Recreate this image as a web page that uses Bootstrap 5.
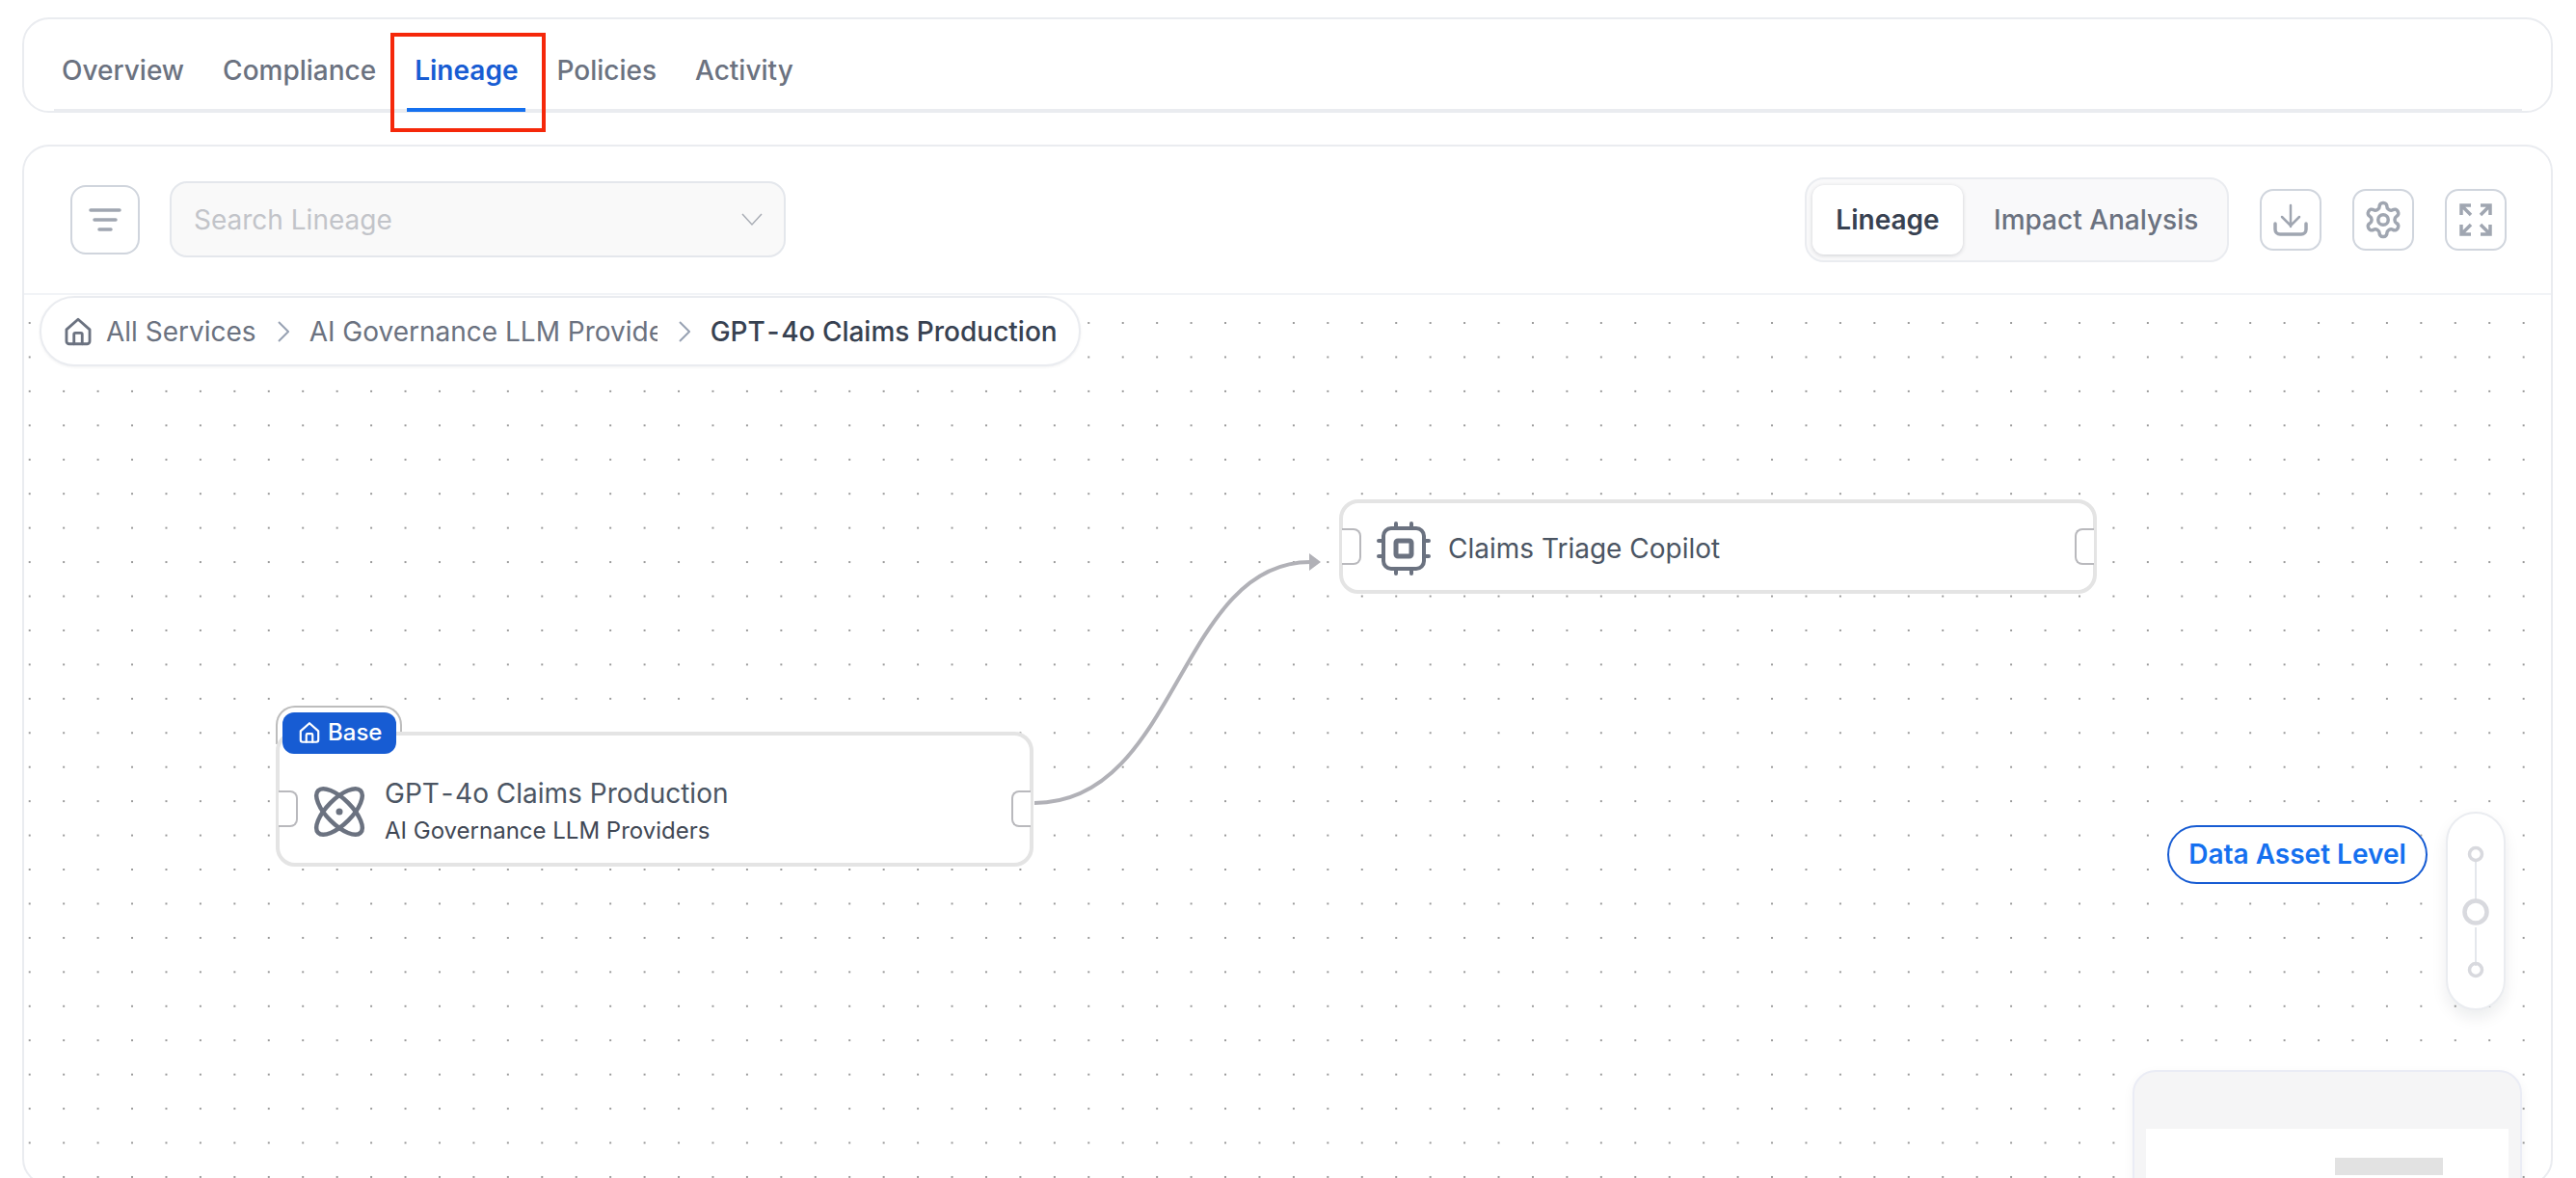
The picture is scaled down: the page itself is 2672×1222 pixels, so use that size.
<!DOCTYPE html>
<html lang="en">
<head>
  <meta charset="UTF-8">
  <title>Lineage</title>
  <link href="https://cdn.jsdelivr.net/npm/bootstrap@5.3.0/dist/css/bootstrap.min.css" rel="stylesheet" />
  <style>
    html, body { height: 100%; overflow: hidden; background: #fff; }
    body { font-family: Inter, "Liberation Sans", sans-serif; font-size: 28px; color: #6b7280; }

    .page-wrap { padding: 18px 24px 0 23px; }

    .tabs-card { height: 99px; border: 2px solid #eaecf0; border-radius: 28px; background: #fff; margin-bottom: 33px; }
    .tabs-row { height: 96px; margin: 0 30px 0 31px; border-bottom: 3px solid #eaecf0; gap: 24px; padding-top: 31px; }
    .tab-link { position: relative; padding: 0 8px; height: 65px; line-height: 44px; color: #6b7280; font-weight: 500; }
    .tab-link.tab-on { color: #175cd3; font-weight: 600; border-bottom: 4px solid #1570ef; }
    .red-box { position: absolute; left: -17px; right: -21px; top: -17px; bottom: -25px; border: 4px solid #f5280a; }

    .main-card { height: 1080px; border: 2px solid #eaecf0; border-radius: 28px; background: #fff; overflow: hidden; }
    .tool-row { height: 154px; padding: 0 46px 0 48px; border-bottom: 2px solid #f2f4f7; }
    .tool-btn { width: 64px; height: 64px; padding: 0; border: 2px solid #d0d5dd; border-radius: 14px; background: #fff; }
    .filter-btn { width: 72px; height: 72px; border-radius: 16px; margin-right: 31px; }
    .search-box { width: 639px; height: 79px; padding: 0 22px 0 23px; border: 2px solid #e4e7ec; border-radius: 18px; background: #f9f9f9; color: #c2c4c9; }
    .view-toggle { width: 440px; height: 88px; padding: 7px 6px; border: 2px solid #eaecf0; border-radius: 20px; background: #f9f9fa; margin-right: 32px; }
    .view-on { width: 156px; height: 72px; border-radius: 12px; background: #fff; color: #374151; font-weight: 600; box-shadow: 0 1px 4px rgba(16, 24, 40, .18); }
    .view-off { padding-left: 32px; font-weight: 500; }
    .tool-gap { gap: 32px; }

    .flow-canvas {
      position: relative; height: 924px; overflow: hidden;
      background-image: radial-gradient(circle, #9a9a9a 1.1px, transparent 1.3px);
      background-size: 35.45px 35.45px;
      background-position: -12px 11.3px;
    }

    .crumbs { position: absolute; left: 16px; top: 1px; width: 1080px; height: 73px; padding: 2px 0 0 21px; background: #fff; border: 2px solid #eaecf0; border-radius: 36px; box-shadow: 0 1px 3px rgba(16, 24, 40, .06); white-space: nowrap; }
    .crumb-home { margin-right: 12px; }
    .crumb-cut { width: 361px; overflow: hidden; }
    .crumb-now { color: #374151; font-weight: 500; }
    .crumb-sep { margin: 0 21px 0 22px; }
    .hy-gap { padding: 0 .06em; }

    .flow-node { position: absolute; background: #fff; border: 4px solid #e4e4e4; border-radius: 20px; }
    .node-base { left: 261px; top: 453px; width: 786px; height: 140px; }
    .node-copilot { left: 1364px; top: 212px; width: 786px; height: 98px; }
    .base-tab { position: absolute; left: 261px; top: 426px; width: 131px; height: 40px; border: 2px solid #bdbdbd; border-bottom: 0; border-radius: 20px 20px 0 0; background: #fff; }
    .base-badge { position: absolute; left: 268px; top: 433px; width: 118px; height: 43px; padding-left: 15px; gap: 6px; border-radius: 12px; background: #175cd3; color: #fff; font-size: 24px; font-weight: 500; z-index: 2; }
    .flow-handle { position: absolute; width: 20px; height: 38px; border: 2px solid #b9b9bd; background: #fff; }
    .handle-in { left: -1px; border-left: 0; border-radius: 0 8px 8px 0; }
    .handle-out { right: -1px; border-right: 0; border-radius: 8px 0 0 8px; }
    .node-base .flow-handle { top: 57px; }
    .node-copilot .flow-handle { top: 26px; }
    .node-inner { height: 100%; }
    .node-base .node-inner { padding-left: 34px; gap: 19px; padding-top: 26px; }
    .node-copilot .node-inner { padding-left: 35px; gap: 18px; padding-top: 4px; }
    .node-title { color: #4b5563; line-height: 40px; }
    .node-sub { color: #3f4754; font-size: 24px; line-height: 38px; }
    .edge-layer { position: absolute; left: 0; top: 0; width: 2622px; height: 924px; }

    .level-pill { position: absolute; left: 2223px; top: 550px; width: 270px; height: 61px; border: 2px solid #175cd3; border-radius: 31px; background: #fff; color: #1570ef; font-weight: 600; }
    .level-track { position: absolute; left: 2512px; top: 536px; width: 62px; height: 206px; border: 2px solid #eaecf0; border-radius: 31px; background: #fff; box-shadow: 0 8px 16px rgba(16, 24, 40, .08); }

    .mini-map { position: absolute; left: 2187px; top: 804px; width: 404px; height: 140px; padding: 59px 12px 0; border: 2px solid #eaecf5; border-radius: 24px; background: #f5f5f6; box-shadow: 0 4px 12px rgba(16, 24, 40, .05); }
    .mini-sheet { position: relative; height: 80px; background: #fff; }
    .mini-node { position: absolute; left: 196px; top: 30px; width: 112px; height: 18px; background: #e2e2e2; }
  </style>
</head>
<body>
  <div class="page-wrap">
    <div class="card tabs-card">
      <nav class="nav tabs-row">
        <a class="tab-link text-decoration-none" href="#">Overview</a>
        <a class="tab-link text-decoration-none" href="#">Compliance</a>
        <a class="tab-link tab-on text-decoration-none" href="#">Lineage<span class="red-box"></span></a>
        <a class="tab-link text-decoration-none" href="#">Policies</a>
        <a class="tab-link text-decoration-none" href="#">Activity</a>
      </nav>
    </div>

    <div class="card main-card">
      <div class="tool-row d-flex align-items-center justify-content-between">
        <div class="d-flex align-items-center">
          <button class="btn tool-btn filter-btn d-flex align-items-center justify-content-center" type="button" aria-label="Filter">
            <svg width="34" height="26" viewBox="0 0 34 26" fill="none" stroke="#a0a6b1" stroke-width="3.500" stroke-linecap="round"><path d="M2 3h30M6 13h22M11 23h12"/></svg>
          </button>
          <div class="search-box d-flex align-items-center justify-content-between">
            <span>Search Lineage</span>
            <svg width="22" height="14" viewBox="0 0 22 14" fill="none" stroke="#a9adb5" stroke-width="1.500"><path d="M1 1l10 11L21 1"/></svg>
          </div>
        </div>
        <div class="d-flex align-items-center">
          <div class="view-toggle d-flex align-items-center">
            <div class="view-on d-flex align-items-center justify-content-center">Lineage</div>
            <div class="view-off">Impact Analysis</div>
          </div>
          <div class="d-flex align-items-center tool-gap">
            <button class="btn tool-btn d-flex align-items-center justify-content-center" type="button" aria-label="Download">
              <svg width="36" height="36" viewBox="0 0 36 36" fill="none" stroke="#a0a6b1" stroke-linecap="round" stroke-linejoin="round"><path stroke-width="2.500" d="M18 3v22M9 15l9 9 9-9"/><path stroke-width="3.500" d="M2 22v6a5 5 0 0 0 5 5h22a5 5 0 0 0 5-5v-6"/></svg>
            </button>
            <button class="btn tool-btn d-flex align-items-center justify-content-center" type="button" aria-label="Settings">
              <svg width="42" height="42" viewBox="0 0 24 24" fill="none" stroke="#a0a6b1" stroke-width="2" stroke-linecap="round" stroke-linejoin="round"><path d="M12.22 2h-.44a2 2 0 0 0-2 2v.18a2 2 0 0 1-1 1.73l-.43.25a2 2 0 0 1-2 0l-.15-.08a2 2 0 0 0-2.730.73l-.22.38a2 2 0 0 0 .73 2.730l.15.1a2 2 0 0 1 1 1.72v.51a2 2 0 0 1-1 1.74l-.15.09a2 2 0 0 0-.73 2.730l.22.38a2 2 0 0 0 2.730.73l.15-.08a2 2 0 0 1 2 0l.43.25a2 2 0 0 1 1 1.73V20a2 2 0 0 0 2 2h.44a2 2 0 0 0 2-2v-.18a2 2 0 0 1 1-1.73l.43-.25a2 2 0 0 1 2 0l.15.08a2 2 0 0 0 2.730-.73l.22-.39a2 2 0 0 0-.73-2.730l-.15-.08a2 2 0 0 1-1-1.74v-.5a2 2 0 0 1 1-1.74l.15-.09a2 2 0 0 0 .73-2.730l-.22-.38a2 2 0 0 0-2.730-.73l-.15.08a2 2 0 0 1-2 0l-.43-.25a2 2 0 0 1-1-1.73V4a2 2 0 0 0-2-2z"/><circle cx="12" cy="12" r="3"/></svg>
            </button>
            <button class="btn tool-btn d-flex align-items-center justify-content-center" type="button" aria-label="Fullscreen">
              <svg width="36" height="36" viewBox="0 0 36 36" fill="none" stroke="#a0a6b1" stroke-width="3.500"><path d="M3 13V3h10M3 3l10 10M33 13V3H23M33 3L23 13M3 23v10h10M3 33l10-10M33 23v10H23M33 33L23 23"/></svg>
            </button>
          </div>
        </div>
      </div>

      <div class="flow-canvas">
        <svg class="edge-layer" viewBox="0 0 2622 924" fill="none">
          <path d="M1048 527C1197 527 1197 277 1334 277" stroke="#b1b1b7" stroke-width="4"/>
          <path d="M1345 277l-12-9v18z" fill="#b1b1b7"/>
        </svg>

        <div class="crumbs d-flex align-items-center">
          <svg class="crumb-home" width="34" height="34" viewBox="0 0 24 24" fill="none" stroke="#6b7280" stroke-width="2" stroke-linecap="round" stroke-linejoin="round"><path d="M3.500 10.500L12 3l8.500 7.500V19a2 2 0 0 1-2 2h-13a2 2 0 0 1-2-2z"/><path d="M9 21v-7a1 1 0 0 1 1-1h4a1 1 0 0 1 1 1v7"/></svg>
          <span>All Services</span>
          <svg class="crumb-sep" width="12" height="22" viewBox="0 0 12 22" fill="none" stroke="#98a2b3" stroke-width="2"><path d="M1 1l10 10L1 21"/></svg>
          <span class="crumb-cut">AI Governance LLM Providers</span>
          <svg class="crumb-sep" width="12" height="22" viewBox="0 0 12 22" fill="none" stroke="#98a2b3" stroke-width="2"><path d="M1 1l10 10L1 21"/></svg>
          <span class="crumb-now">GPT<span class="hy-gap">-</span>4o Claims Production</span>
        </div>

        <div class="base-tab"></div>
        <div class="base-badge d-flex align-items-center">
          <svg width="26" height="26" viewBox="0 0 24 24" fill="none" stroke="#fff" stroke-width="2" stroke-linecap="round" stroke-linejoin="round"><path d="M3.500 10.500L12 3l8.500 7.500V19a2 2 0 0 1-2 2h-13a2 2 0 0 1-2-2z"/><path d="M9 21v-7a1 1 0 0 1 1-1h4a1 1 0 0 1 1 1v7"/></svg>
          <span>Base</span>
        </div>
        <div class="flow-node node-base">
          <span class="flow-handle handle-in"></span>
          <span class="flow-handle handle-out"></span>
          <div class="node-inner d-flex align-items-center">
            <svg width="56" height="56" viewBox="0 0 56 56" fill="none" stroke="#6b7280" stroke-width="4.500"><ellipse cx="28" cy="28" rx="31" ry="13" transform="rotate(45 28 28)"/><ellipse cx="28" cy="28" rx="31" ry="13" transform="rotate(-45 28 28)"/><circle cx="28" cy="28" r="3.500" fill="#6b7280" stroke="none"/></svg>
            <div>
              <div class="node-title">GPT<span class="hy-gap">-</span>4o Claims Production</div>
              <div class="node-sub">AI Governance LLM Providers</div>
            </div>
          </div>
        </div>

        <div class="flow-node node-copilot">
          <span class="flow-handle handle-in"></span>
          <span class="flow-handle handle-out"></span>
          <div class="node-inner d-flex align-items-center">
            <svg width="56" height="56" viewBox="0 0 56 56" fill="none" stroke="#6b7280" stroke-width="4" stroke-linecap="round" stroke-linejoin="round"><rect x="7" y="7" width="42" height="42" rx="8"/><rect x="20" y="20" width="16" height="16" rx="2" stroke-width="5"/><path d="M20 2v5M36 2v5M20 49v5M36 49v5M2 20h5M2 36h5M49 20h5M49 36h5"/></svg>
            <div class="node-title">Claims Triage Copilot</div>
          </div>
        </div>

        <div class="level-pill d-flex align-items-center justify-content-center">Data Asset Level</div>
        <div class="level-track">
          <svg width="58" height="202" viewBox="0 0 58 202" fill="none" stroke="#d8d9de"><path stroke="#e4e7ec" stroke-width="2" d="M29 50v42M29 118v40"/><circle cx="29" cy="42" r="6.500" stroke-width="3.500"/><circle cx="29" cy="102" r="11.500" stroke-width="4.500"/><circle cx="29" cy="162" r="6.500" stroke-width="3.500"/></svg>
        </div>

        <div class="mini-map">
          <div class="mini-sheet"><div class="mini-node"></div></div>
        </div>
      </div>
    </div>
  </div>

  <script src="https://cdn.jsdelivr.net/npm/bootstrap@5.3.0/dist/js/bootstrap.bundle.min.js"></script>
</body>
</html>
